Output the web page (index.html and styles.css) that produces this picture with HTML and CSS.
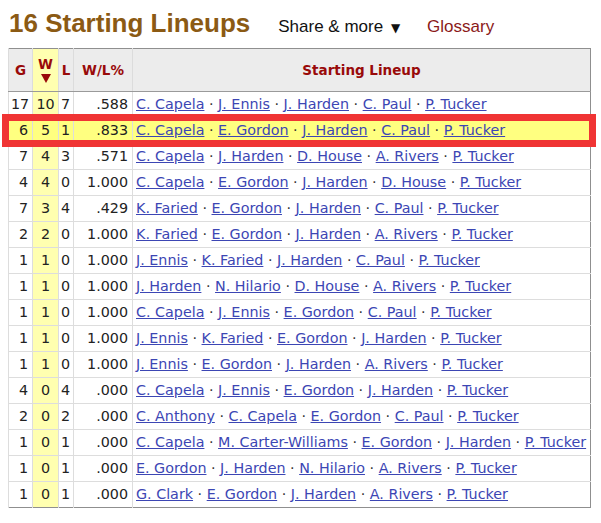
FILE: index.html
```html
<!DOCTYPE html>
<html>
<head>
<meta charset="utf-8">
<link rel="stylesheet" href="styles.css">
</head>
<body>
<div class="heading">
  <h2 class="title">16 Starting Lineups</h2>
  <span class="share">Share &amp; more <span class="caret">▼</span></span>
  <span class="glossary">Glossary</span>
</div>
<table class="lineups">
  <colgroup>
    <col class="c-g"><col class="c-w"><col class="c-l"><col class="c-pct"><col class="c-lineup">
  </colgroup>
  <thead>
    <tr>
      <th>G</th>
      <th class="wcol"><span class="wlabel">W</span><span class="arrow"></span></th>
      <th>L</th>
      <th>W/L%</th>
      <th>Starting Lineup</th>
    </tr>
  </thead>
  <tbody>
    <tr><td>17</td><td class="wcol">10</td><td>7</td><td>.588</td><td class="names"><a>C. Capela</a> · <a>J. Ennis</a> · <a>J. Harden</a> · <a>C. Paul</a> · <a>P. Tucker</a></td></tr>
    <tr class="hl"><td>6</td><td class="wcol">5</td><td>1</td><td>.833</td><td class="names"><a>C. Capela</a> · <a>E. Gordon</a> · <a>J. Harden</a> · <a>C. Paul</a> · <a>P. Tucker</a></td></tr>
    <tr><td>7</td><td class="wcol">4</td><td>3</td><td>.571</td><td class="names"><a>C. Capela</a> · <a>J. Harden</a> · <a>D. House</a> · <a>A. Rivers</a> · <a>P. Tucker</a></td></tr>
    <tr><td>4</td><td class="wcol">4</td><td>0</td><td>1.000</td><td class="names"><a>C. Capela</a> · <a>E. Gordon</a> · <a>J. Harden</a> · <a>D. House</a> · <a>P. Tucker</a></td></tr>
    <tr><td>7</td><td class="wcol">3</td><td>4</td><td>.429</td><td class="names"><a>K. Faried</a> · <a>E. Gordon</a> · <a>J. Harden</a> · <a>C. Paul</a> · <a>P. Tucker</a></td></tr>
    <tr><td>2</td><td class="wcol">2</td><td>0</td><td>1.000</td><td class="names"><a>K. Faried</a> · <a>E. Gordon</a> · <a>J. Harden</a> · <a>A. Rivers</a> · <a>P. Tucker</a></td></tr>
    <tr><td>1</td><td class="wcol">1</td><td>0</td><td>1.000</td><td class="names"><a>J. Ennis</a> · <a>K. Faried</a> · <a>J. Harden</a> · <a>C. Paul</a> · <a>P. Tucker</a></td></tr>
    <tr><td>1</td><td class="wcol">1</td><td>0</td><td>1.000</td><td class="names"><a>J. Harden</a> · <a>N. Hilario</a> · <a>D. House</a> · <a>A. Rivers</a> · <a>P. Tucker</a></td></tr>
    <tr><td>1</td><td class="wcol">1</td><td>0</td><td>1.000</td><td class="names"><a>C. Capela</a> · <a>J. Ennis</a> · <a>E. Gordon</a> · <a>C. Paul</a> · <a>P. Tucker</a></td></tr>
    <tr><td>1</td><td class="wcol">1</td><td>0</td><td>1.000</td><td class="names"><a>J. Ennis</a> · <a>K. Faried</a> · <a>E. Gordon</a> · <a>J. Harden</a> · <a>P. Tucker</a></td></tr>
    <tr><td>1</td><td class="wcol">1</td><td>0</td><td>1.000</td><td class="names"><a>J. Ennis</a> · <a>E. Gordon</a> · <a>J. Harden</a> · <a>A. Rivers</a> · <a>P. Tucker</a></td></tr>
    <tr><td>4</td><td class="wcol">0</td><td>4</td><td>.000</td><td class="names"><a>C. Capela</a> · <a>J. Ennis</a> · <a>E. Gordon</a> · <a>J. Harden</a> · <a>P. Tucker</a></td></tr>
    <tr><td>2</td><td class="wcol">0</td><td>2</td><td>.000</td><td class="names"><a>C. Anthony</a> · <a>C. Capela</a> · <a>E. Gordon</a> · <a>C. Paul</a> · <a>P. Tucker</a></td></tr>
    <tr><td>1</td><td class="wcol">0</td><td>1</td><td>.000</td><td class="names"><a>C. Capela</a> · <a>M. Carter-Williams</a> · <a>E. Gordon</a> · <a>J. Harden</a> · <a>P. Tucker</a></td></tr>
    <tr><td>1</td><td class="wcol">0</td><td>1</td><td>.000</td><td class="names"><a>E. Gordon</a> · <a>J. Harden</a> · <a>N. Hilario</a> · <a>A. Rivers</a> · <a>P. Tucker</a></td></tr>
    <tr><td>1</td><td class="wcol">0</td><td>1</td><td>.000</td><td class="names"><a>G. Clark</a> · <a>E. Gordon</a> · <a>J. Harden</a> · <a>A. Rivers</a> · <a>P. Tucker</a></td></tr>
  </tbody>
</table>
<div class="callout"></div>
</body>
</html>
```

FILE: styles.css
```css
html, body {
  margin: 0;
  padding: 0;
  background: #fff;
}
body {
  padding: 8px;
  font-family: "DejaVu Sans", Verdana, sans-serif;
  position: relative;
}
.heading {
  display: flex;
  align-items: baseline;
  height: 30px;
  font-family: "Liberation Sans", Arial, sans-serif;
}
.title {
  margin: 0;
  font-size: 26px;
  line-height: 30px;
  font-weight: bold;
  color: #8b5a14;
  margin-left: 1px;
}
.share {
  margin-left: 28px;
  font-size: 17px;
  color: #111;
}
.caret {
  font-family: "DejaVu Sans", sans-serif;
  font-size: 12px;
  margin-left: 3px;
}
.glossary {
  margin-left: 27px;
  font-size: 17px;
  color: #8b1a1a;
}
.lineups {
  margin-top: 10px;
  border-collapse: collapse;
  table-layout: fixed;
  width: 583px;
  border: 1px solid #8f8f8f;
  font-size: 14.3px;
  color: #222;
}
.c-g { width: 24px; }
.c-w { width: 26px; }
.c-l { width: 15px; }
.c-pct { width: 59px; }
.lineups th {
  background: #ececec;
  color: #990a0a;
  font-size: 13.5px;
  font-weight: bold;
  height: 42px;
  padding: 0;
  text-align: center;
  vertical-align: middle;
  border-left: 1px solid #dcdcdc;
  border-bottom: 1px solid #9a9a9a;
}
.lineups th.wcol {
  background: #ffffb0;
}
.wlabel {
  display: block;
  line-height: 15px;
}
.arrow {
  display: block;
  width: 0;
  height: 0;
  margin: 2px auto 0;
  border-left: 5px solid transparent;
  border-right: 5px solid transparent;
  border-top: 9px solid #990a0a;
}
.lineups td {
  height: 25px;
  padding: 0 4px 0 2px;
  line-height: 25px;
  text-align: right;
  white-space: nowrap;
  border-top: 1px solid #dddddd;
  border-left: 1px solid #dddddd;
}
.lineups td.wcol {
  background: #ffffb0;
  text-align: center;
  padding: 0;
}
.lineups td.names {
  text-align: left;
  padding-left: 3px;
  color: #333;
}
.names a {
  color: #3c46b4;
  text-decoration: underline;
}
.lineups tr.hl td {
  background: #ffff80;
}
.callout {
  position: absolute;
  left: 2px;
  top: 114px;
  width: 594px;
  height: 33px;
  box-sizing: border-box;
  border: 7px solid #f03434;
  pointer-events: none;
}
```
